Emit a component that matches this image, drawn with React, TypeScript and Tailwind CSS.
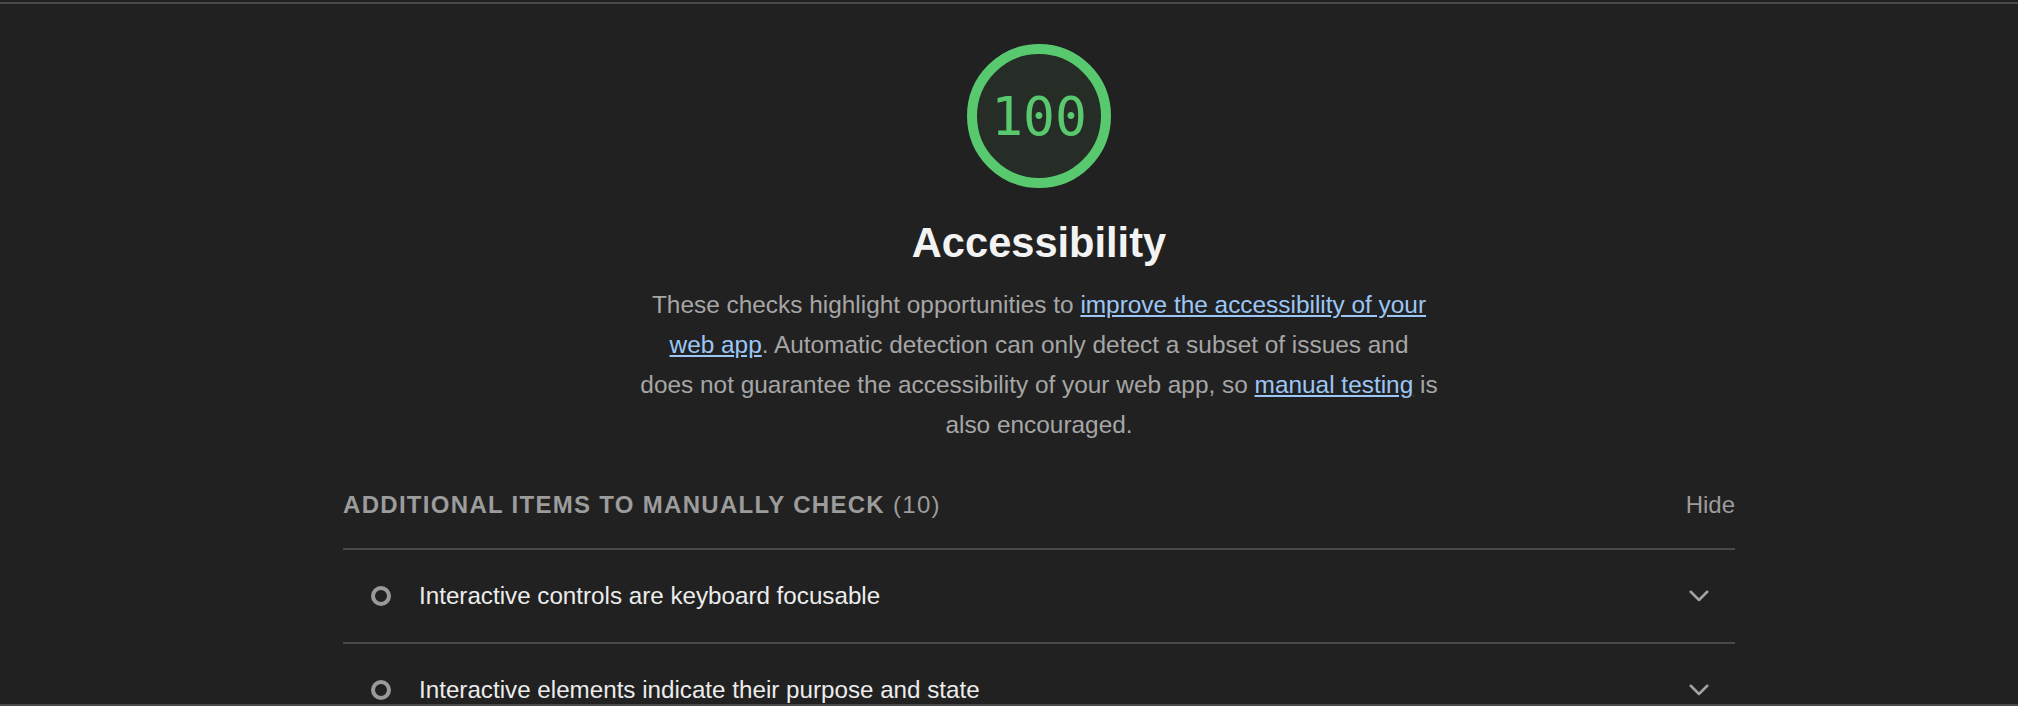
const manualItems = [
  'Interactive controls are keyboard focusable',
  'Interactive elements indicate their purpose and state',
];

function Chevron() {
  return (
    <svg width="20" height="12" viewBox="0 0 20 12" fill="none" className="shrink-0">
      <polyline points="1.75,1.75 10,10 18.25,1.75" stroke="#a3a3a3" strokeWidth="2.5" strokeLinecap="round" strokeLinejoin="round" />
    </svg>
  );
}

export default function App() {
  return (
    <div className="flex h-[706px] flex-col overflow-hidden bg-[#212121] font-['Liberation_Sans',Arial,sans-serif]">
      <div className="mt-[2px] h-[2px] shrink-0 bg-[#4a4a4a]" />

      <main className="min-h-0 flex-1 overflow-hidden pl-[60px]">
        <div className="mx-auto w-[1392px]">
          <div className="mt-[40px] flex flex-col items-center">
            <div className="flex h-[144px] w-[144px] items-center justify-center rounded-full border-[10px] border-[#58c96e] bg-[#262d27]">
              <span className="font-['DejaVu_Sans_Mono',monospace] text-[53px] leading-none text-[#58c96e]">100</span>
            </div>
            <h1 className="mt-[31px] text-[41.6px] font-bold leading-[48px] text-[#f3f3f3]">Accessibility</h1>
            <p className="mt-[18px] max-w-[798px] text-center text-[24.4px] leading-[40px] text-[#a6a6a6]">
              These checks highlight opportunities to{' '}
              <a href="#" className="text-[#9cc6f6] underline">
                improve the accessibility of your web app
              </a>
              . Automatic detection can only detect a subset of issues and does not guarantee the accessibility of your
              web app, so{' '}
              <a href="#" className="text-[#9cc6f6] underline">
                manual testing
              </a>{' '}
              is also encouraged.
            </p>
          </div>

          <section className="mt-[46px]">
            <div className="flex items-center justify-between border-b-2 border-[#4a4a4a] pb-[29px] text-[24px] leading-[28px] text-[#9c9c9c]">
              <span className="tracking-[1.3px]">
                <span className="font-bold">ADDITIONAL ITEMS TO MANUALLY CHECK</span> (10)
              </span>
              <span>Hide</span>
            </div>

            {manualItems.map((item) => (
              <div key={item} className="flex h-[94px] items-center border-b-2 border-[#4a4a4a] pl-[28px] pr-[26px]">
                <span className="h-[20px] w-[20px] shrink-0 rounded-full border-[4px] border-[#9a9a9a]" />
                <span className="ml-[28px] flex-1 text-[24.2px] leading-[28px] text-[#ececec]">{item}</span>
                <Chevron />
              </div>
            ))}
          </section>
        </div>
      </main>

      <div className="h-[2px] shrink-0 bg-[#4a4a4a]" />
    </div>
  );
}
